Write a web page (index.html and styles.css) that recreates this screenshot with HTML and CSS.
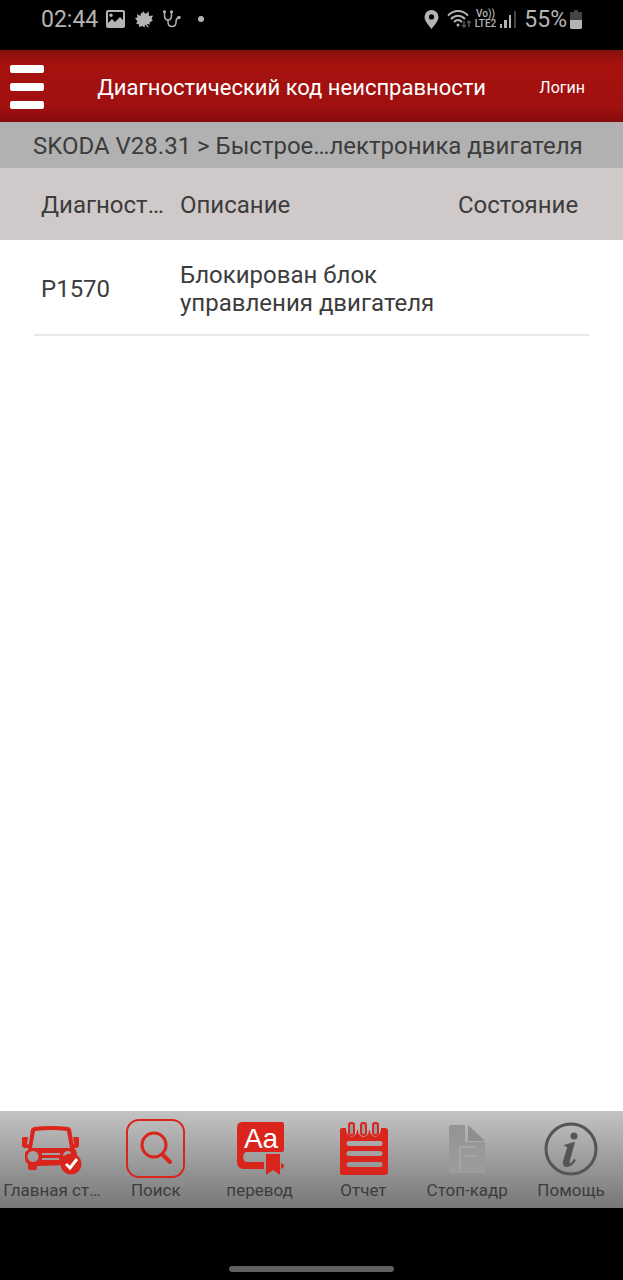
FILE: index.html
```html
<!DOCTYPE html>
<html lang="ru">
<head>
    <meta charset="UTF-8">
    <meta name="viewport" content="width=device-width, initial-scale=1.0">
    <title>Диагностический код неисправности</title>
    <link rel="stylesheet" href="styles.css">
</head>
<body>
    <div class="status-bar">
        <div class="status-left">
            <span class="clock">02:44</span>
            <svg width="19" height="18" viewBox="0 0 19 18">
                <path fill="#b4b4b4" fill-rule="evenodd" d="M2 0h15a2 2 0 0 1 2 2v14a2 2 0 0 1-2 2H2a2 2 0 0 1-2-2V2a2 2 0 0 1 2-2zM2 2v11l4-4 3 3 5-5 3 3V2zM5 3.500a1.800 1.800 0 1 1 0 3.600a1.800 1.800 0 1 1 0-3.600z"/>
            </svg>
            <svg width="18" height="18" viewBox="0 0 18 18">
                <path fill="#b4b4b4" d="M8 1l2.500 3 3-2.500.5 4.500 4-.5-1.500 3.500 1.500 1.500-3.500 2 .5 2-3.500-.5 2.500 3-1 .5-3-3-.5 3-2-1.500L4 17l0-2.500-3-1 1.500-2L0 8l2.500-.5L2 4l3.500 2L6 2.500l1.500 1z"/>
            </svg>
            <svg width="18" height="18" viewBox="0 0 18 18" fill="none" stroke="#b4b4b4" stroke-width="1.500" stroke-linecap="round">
                <path d="M1.500 2v3c0 3 1 5 3.500 5s3.500-2 3.500-5V2M5 10v2c0 3 1.500 4.500 4 4.500s4-1.500 4-4.500c0-2 0-3.500 2-4"/>
                <circle cx="1.500" cy="1.800" r=".8"/>
                <circle cx="8.500" cy="1.800" r=".8"/>
                <circle cx="16" cy="7.500" r="1"/>
            </svg>
            <span class="dot"></span>
        </div>
        <div class="status-right">
            <svg width="15" height="19" viewBox="0 0 15 19">
                <path fill="#b4b4b4" fill-rule="evenodd" d="M7.500 0A7 7 0 0 1 14.500 7c0 4-4 8-7 12C4.500 15 .5 11 .5 7a7 7 0 0 1 7-7zm0 4.300a2.600 2.600 0 1 0 0 5.200a2.600 2.600 0 1 0 0-5.200z"/>
            </svg>
            <svg class="wifi" width="24" height="19" viewBox="0 0 24 19" fill="none" stroke="#b4b4b4" stroke-width="2">
                <path d="M1 5.500C7-.5 15-.5 21 5.500M4 9c4-4.500 10-4.500 14 0M7 12c2.500-2.500 5.500-2.500 8 0"/>
                <circle cx="11" cy="15" r="1.500" fill="#b4b4b4" stroke="none"/>
                <path stroke="#555" stroke-width="1.500" d="M17 11v6M15 15l2 2 2-2M22 17v-6M20 13l2-2 2 2"/>
            </svg>
            <div class="lte">
                <div>Vo))</div>
                <div>LTE2</div>
            </div>
            <svg class="signal" width="16" height="18" viewBox="0 0 16 18">
                <path fill="#b4b4b4" d="M0 14h2v4H0zM4 10h3v8H4zM9 5h2v13H9z"/>
                <path fill="#444" d="M14 1h2v17h-2z"/>
            </svg>
            <span class="percent">55%</span>
            <svg width="12" height="19" viewBox="0 0 12 19">
                <path fill="#444" d="M4 0h4v2h4v8H0V2h4z"/>
                <path fill="#b4b4b4" d="M0 10h12v8l-1 1H1l-1-1z"/>
            </svg>
        </div>
    </div>

    <header class="header">
        <button class="menu-btn" aria-label="Меню">
            <span></span>
            <span></span>
            <span></span>
        </button>
        <h1>Диагностический код неисправности</h1>
        <a class="login" href="#">Логин</a>
    </header>

    <div class="breadcrumb">SKODA V28.31 &gt; Быстрое…лектроника двигателя</div>

    <main>
        <table class="codes">
            <thead>
                <tr>
                    <th class="col-code">Диагност…</th>
                    <th>Описание</th>
                    <th class="col-state">Состояние</th>
                </tr>
            </thead>
            <tbody>
                <tr>
                    <td class="col-code">P1570</td>
                    <td>Блокирован блок управления двигателя</td>
                    <td class="col-state"></td>
                </tr>
            </tbody>
        </table>
    </main>

    <nav class="toolbar">
        <button class="tool">
            <svg width="60" height="60" viewBox="0 0 60 60">
                <path fill="#da251c" fill-rule="evenodd" d="M9 11q1-1 3-2 17-2 34 0 2 1 3 2l3 19c2 2 3 4 3 8v9h-5l-35 1v2q0 2-3 2H8q-2 0-2-2v-4q-3-2-3-5v-5c0-2 1-3 3-4zM13 13l-3 17h38l-3-17q-16-2-32 0zM11 33a5.500 5.500 0 1 0 0 11a5.500 5.500 0 1 0 0-11zM20 35h18v2H20zM20 40h17v2H20zM46 33a5 5 0 0 0-5 5l8-2q0-3-3-3z"/>
                <path fill="#da251c" d="M1 19h5l-1 7 3 1-1 3H2l-2-2v-8zM56 19h-5l1 7-2 1 1 3h4l2-2v-8z"/>
                <circle cx="49" cy="46" r="10.500" fill="#da251c"/>
                <path fill="none" stroke="#fff" stroke-width="3" d="M44 46l4 4 7-9"/>
            </svg>
            <span>Главная ст…</span>
        </button>
        <button class="tool">
            <svg width="60" height="60" viewBox="0 0 60 60" fill="none" stroke="#da251c">
                <rect x="1" y="2" width="57" height="57" rx="12" stroke-width="2"/>
                <circle cx="28" cy="27" r="12" stroke-width="3"/>
                <path stroke-width="4" stroke-linecap="round" d="M37 37l7 7"/>
            </svg>
            <span>Поиск</span>
        </button>
        <button class="tool">
            <svg width="60" height="60" viewBox="0 0 60 60">
                <path fill="#da251c" d="M12 4h40q2 0 2 2v26q0 2-2 2H17c-5 0-5 10 0 10h17v7H14q-7 0-7-7V10q0-6 5-6z"/>
                <path fill="#da251c" d="M36 36h14v21l-7-5-7 5z"/>
                <path fill="#da251c" d="M51 45q3 1 3 3t-3 3z"/>
                <text x="31" y="30" font-family="Liberation Sans, sans-serif" font-size="28" fill="#fff" text-anchor="middle">Aa</text>
            </svg>
            <span>перевод</span>
        </button>
        <button class="tool">
            <svg width="60" height="60" viewBox="0 0 60 60">
                <path fill="#da251c" fill-rule="evenodd" d="M9 10h4c0 11 11 11 11 2h1c0 9 11 9 11 0h1c0 9 11 9 11-2h4q3 0 3 3v41q0 3-3 3H9q-2 0-2-2V12q0-2 2-2zM16 23a2 2 0 0 0 0 5h31a2 2 0 0 0 0-5zM16 33a2 2 0 0 0 0 5h31a2 2 0 0 0 0-5zM16 44a2 2 0 0 0 0 5h31a2 2 0 0 0 0-5z"/>
                <g fill="#9c9c9c" stroke="#da251c" stroke-width="2">
                    <rect x="16" y="5" width="5" height="12" rx="2"/>
                    <rect x="28" y="5" width="5" height="12" rx="2"/>
                    <rect x="40" y="5" width="5" height="12" rx="2"/>
                </g>
            </svg>
            <span>Отчет</span>
        </button>
        <button class="tool">
            <svg width="60" height="60" viewBox="0 0 60 60">
                <defs>
                    <linearGradient id="page" x1="0" y1="0" x2="0" y2="1">
                        <stop offset="0" stop-color="#949494"/>
                        <stop offset="1" stop-color="#9c9c9c"/>
                    </linearGradient>
                </defs>
                <path fill="url(#page)" d="M14 7h14v17h20v31H14q-2 0-2-2V9q0-2 2-2z"/>
                <path fill="#8e8e8e" d="M31 7l17 16H31z"/>
                <path fill="none" stroke="#a6a6a6" stroke-width="2" d="M39 29H23v23M26 38h14"/>
            </svg>
            <span>Стоп-кадр</span>
        </button>
        <button class="tool">
            <svg width="60" height="60" viewBox="0 0 60 60">
                <circle cx="30" cy="31" r="25" fill="none" stroke="#555" stroke-width="3"/>
                <circle cx="33" cy="18" r="3.500" fill="#555"/>
                <path fill="#555" d="M23 27l10-3h1l-5 18q-1 4 1 3l3-4 2 1q-4 7-9 7-5 0-4-6l4-13q0-2-3-2z"/>
            </svg>
            <span>Помощь</span>
        </button>
    </nav>

    <div class="gesture-bar"><span></span></div>
</body>
</html>
```
FILE: styles.css
```css
* {
    box-sizing: border-box;
}
body {
    margin: 0;
    min-height: 100vh;
    display: flex;
    flex-direction: column;
    font-family: Roboto, sans-serif;
    background: #fff;
    color: #3c3c3c;
}
button {
    padding: 0;
    border: none;
    background: none;
    font-family: inherit;
    color: inherit;
    cursor: pointer;
}
svg {
    display: block;
    flex-shrink: 0;
}

/* status bar */
.status-bar {
    display: flex;
    justify-content: space-between;
    height: 50px;
    padding: 0 41px 12px 41px;
    background: #000;
    color: #b4b4b4;
}
.status-left,
.status-right {
    display: flex;
    align-items: center;
}
.status-left {
    gap: 10px;
}
.clock,
.percent {
    font-size: 23px;
}
.clock {
    margin-right: -2px;
}
.dot {
    width: 6px;
    height: 6px;
    margin-left: 7px;
    border-radius: 50%;
    background: #b4b4b4;
}
.wifi {
    margin-left: 8px;
}
.lte {
    margin: 0 4px;
    font-size: 10px;
    line-height: 10px;
    font-weight: 500;
    text-align: center;
}
.signal {
    margin-right: 8px;
}
.percent {
    margin-right: 3px;
}

/* header */
.header {
    display: flex;
    align-items: center;
    height: 72px;
    padding: 2px 38px 0 10px;
    background: linear-gradient(#84100c, #a6120e 20%, #a01010 80%, #840c0e);
    color: #fff;
}
.menu-btn {
    display: flex;
    flex-direction: column;
    gap: 10px;
    width: 34px;
}
.menu-btn span {
    height: 8px;
    border-radius: 2px;
    background: #fff;
}
.header h1 {
    flex: 1;
    margin: 0;
    font-size: 22px;
    font-weight: 400;
    text-align: center;
}
.login {
    color: #fff;
    font-size: 16px;
    text-decoration: none;
}

.breadcrumb {
    padding: 2px 33px 0;
    font-size: 24px;
    line-height: 44px;
    white-space: nowrap;
    background: #b1b1b1;
}

/* codes table */
main {
    flex: 1;
}
.codes {
    width: 100%;
    border-collapse: collapse;
    table-layout: fixed;
    font-size: 24px;
    line-height: 28px;
}
.codes th,
.codes td {
    padding: 2px 0 0;
    font-weight: 400;
    text-align: left;
}
.codes th {
    height: 72px;
    background: #cfc9c9;
}
.codes td {
    height: 96px;
}
.codes tbody tr {
    background: linear-gradient(#e8e8e8, #e8e8e8) no-repeat center bottom;
    background-size: calc(100% - 67px) 2px;
}
.codes .col-code {
    width: 180px;
    padding-left: 41px;
}
.codes .col-state {
    width: 165px;
}

/* bottom toolbar */
.toolbar {
    display: grid;
    grid-template-columns: repeat(6, 1fr);
    height: 97px;
    background: linear-gradient(#c3c3c3, #777);
}
.tool {
    display: flex;
    flex-direction: column;
    align-items: center;
    padding-top: 7px;
    font-size: 17px;
    line-height: 24px;
    white-space: nowrap;
}
.gesture-bar {
    display: flex;
    justify-content: center;
    align-items: flex-end;
    height: 72px;
    padding-bottom: 8px;
    background: #000;
}
.gesture-bar span {
    width: 165px;
    height: 6px;
    border-radius: 3px;
    background: #616161;
}
```
